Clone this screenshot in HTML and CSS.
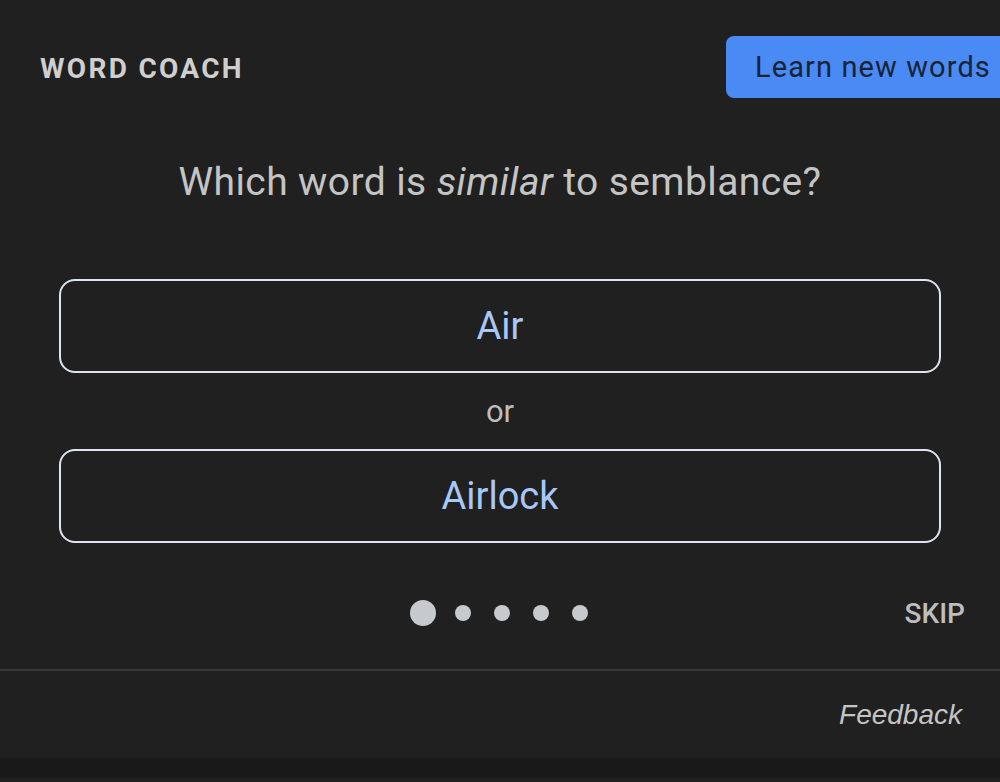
FILE: index.html
```html
<!DOCTYPE html>
<html lang="en">
<head>
<meta charset="utf-8">
<title>Word Coach</title>
<link rel="stylesheet" href="styles.css">
</head>
<body>
<div class="card">
  <header class="header">
    <h1 class="title">WORD COACH</h1>
    <button class="learn">Learn new words</button>
  </header>
  <p class="question">Which word is <em>similar</em> to semblance?</p>
  <div class="options">
    <button class="option">Air</button>
    <div class="or">or</div>
    <button class="option">Airlock</button>
  </div>
  <div class="progress">
    <div class="spacer"></div>
    <div class="dots">
      <span class="dot dot-active"></span>
      <span class="dot"></span>
      <span class="dot"></span>
      <span class="dot"></span>
      <span class="dot"></span>
    </div>
    <div class="skip-wrap"><span class="skip">SKIP</span></div>
  </div>
  <div class="divider"></div>
  <footer class="footer">
    <span class="feedback">Feedback</span>
  </footer>
</div>
<div class="strip"></div>
</body>
</html>
```
FILE: styles.css
```css
html, body {
  margin: 0;
  padding: 0;
  background: #202020;
  overflow: hidden;
}
body {
  width: 1000px;
  height: 782px;
  font-family: Roboto, "Liberation Sans", sans-serif;
}
.card {
  display: flex;
  flex-direction: column;
  height: 758px;
  background: #202020;
}
.header {
  display: flex;
  align-items: center;
  justify-content: space-between;
  padding-top: 36px;
  padding-left: 40px;
  height: 62px;
}
.title {
  margin: 0;
  padding-top: 2px;
  font-size: 28px;
  font-weight: 700;
  letter-spacing: 2.3px;
  color: #cfcfcf;
}
.learn {
  height: 62px;
  width: 300px;
  margin-right: -26px;
  border: none;
  border-radius: 8px 0 0 8px;
  background: #4a8af4;
  color: #1a2333;
  font-family: Roboto, sans-serif;
  font-size: 29px;
  letter-spacing: 1.1px;
  text-align: left;
  padding: 0 0 0 29px;
}
.question {
  margin: 60px 0 0;
  height: 48px;
  line-height: 48px;
  text-align: center;
  font-size: 39px;
  letter-spacing: 0.4px;
  color: #c4c4c4;
}
.question em {
  font-style: italic;
}
.options {
  display: flex;
  flex-direction: column;
  margin: 73px 59px 0;
}
.option {
  height: 94px;
  border: 2px solid #dde4ef;
  border-radius: 16px;
  background: transparent;
  color: #a8c7fa;
  font-family: Roboto, sans-serif;
  font-size: 38px;
}
.or {
  height: 40px;
  line-height: 40px;
  margin: 19px 0 17px;
  text-align: center;
  font-size: 31px;
  color: #bdbdbd;
}
.progress {
  display: grid;
  grid-template-columns: 1fr auto 1fr;
  align-items: center;
  height: 40px;
  margin-top: 50px;
}
.dots {
  display: flex;
  align-items: center;
  gap: 23px;
  padding-right: 2px;
}
.dot {
  width: 16px;
  height: 16px;
  border-radius: 50%;
  background: #c6c9ce;
}
.dot-active {
  width: 26px;
  height: 26px;
  margin-right: -4px;
}
.skip-wrap {
  display: flex;
  justify-content: flex-end;
  padding-right: 35px;
}
.skip {
  font-size: 28px;
  font-weight: 500;
  color: #bdbdbd;
}
.divider {
  margin-top: 36px;
  height: 2px;
  background: #383838;
}
.footer {
  flex: 1;
  display: flex;
  align-items: center;
  justify-content: flex-end;
  padding-right: 38px;
}
.feedback {
  font-family: "Liberation Sans", Arial, sans-serif;
  font-style: italic;
  font-size: 28px;
  color: #c4c4c4;
}
.strip {
  height: 20px;
  background: #191919;
}
```
